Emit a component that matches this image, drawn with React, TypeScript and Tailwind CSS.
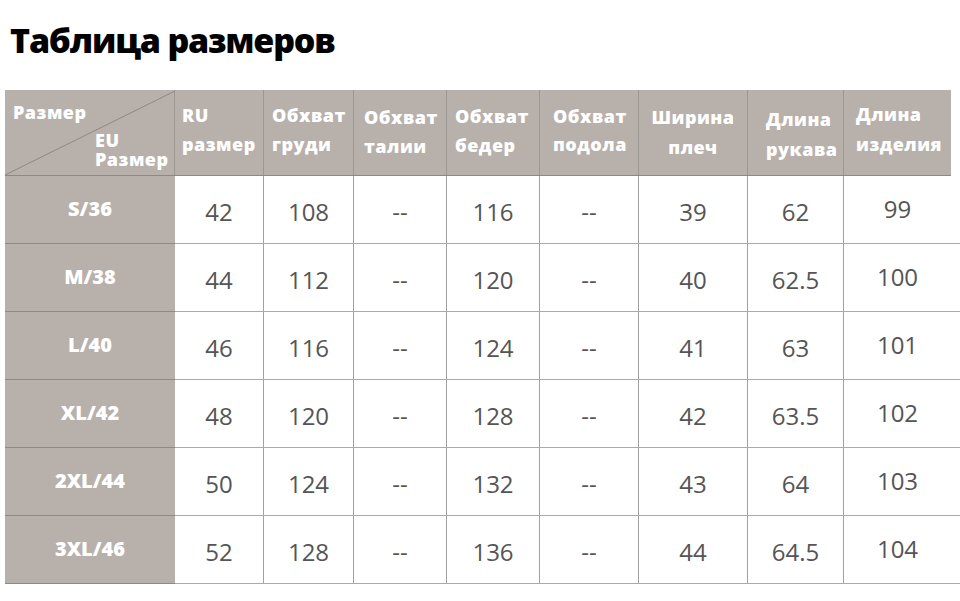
import React from "react";

const rows = [
  ["S/36", "42", "108", "--", "116", "--", "39", "62", "99"],
  ["M/38", "44", "112", "--", "120", "--", "40", "62.5", "100"],
  ["L/40", "46", "116", "--", "124", "--", "41", "63", "101"],
  ["XL/42", "48", "120", "--", "128", "--", "42", "63.5", "102"],
  ["2XL/44", "50", "124", "--", "132", "--", "43", "64", "103"],
  ["3XL/46", "52", "128", "--", "136", "--", "44", "64.5", "104"],
];

const dataCellW = [
  "w-[89px]",
  "w-[90px]",
  "w-[93px]",
  "w-[93px]",
  "w-[99px]",
  "w-[109px]",
  "w-[96px]",
];

export default function App() {
  return (
    <div
      className="w-[960px] h-[601px] bg-white overflow-hidden"
      style={{ fontFamily: "'Open Sans', 'Noto Sans', sans-serif" }}
    >
      <h1 className="pt-[20px] pl-[10px] text-[34px] leading-[40px] font-extrabold tracking-[-1.2px] text-black">
        Таблица размеров
      </h1>

      {/* header */}
      <div className="mt-[30px] ml-[5px] flex h-[86px] w-[946px] bg-[#b8b0ab] border-b border-[#8f8985] text-white font-extrabold text-[18px] tracking-[0.5px]">
        <div className="relative w-[170px] shrink-0 border-r border-[#9d9794] pt-[13px] leading-[19px]">
          <svg
            className="absolute inset-0"
            width="170"
            height="85"
            viewBox="0 0 170 85"
          >
            <line x1="0" y1="85" x2="170" y2="1" stroke="#8f8985" strokeWidth="1" />
          </svg>
          <div className="relative pl-[8px]">Размер</div>
          <div className="relative pl-[90px] mt-[9px]">
            EU
            <br />
            Размер
          </div>
        </div>
        <div className="w-[89px] shrink-0 border-r border-[#9d9794] pl-[7px] pt-[11px] leading-[29px]">
          <div>RU</div>
          <div>размер</div>
        </div>
        <div className="w-[90px] shrink-0 border-r border-[#9d9794] pl-[8px] pt-[11px] leading-[29px]">
          <div>Обхват</div>
          <div>груди</div>
        </div>
        <div className="w-[93px] shrink-0 border-r border-[#9d9794] pl-[10px] pt-[13px] leading-[29px]">
          <div>Обхват</div>
          <div>талии</div>
        </div>
        <div className="w-[93px] shrink-0 border-r border-[#9d9794] pl-[8px] pt-[12px] leading-[29px]">
          <div>Обхват</div>
          <div>бедер</div>
        </div>
        <div className="w-[99px] shrink-0 border-r border-[#9d9794] pl-[13px] pt-[12px] leading-[28px]">
          <div>Обхват</div>
          <div>подола</div>
        </div>
        <div className="w-[109px] shrink-0 border-r border-[#9d9794] pt-[12px] leading-[30px] text-center">
          <div>Ширина</div>
          <div>плеч</div>
        </div>
        <div className="w-[96px] shrink-0 border-r border-[#9d9794] pl-[18px] pt-[14px] leading-[30px]">
          <div>Длина</div>
          <div>рукава</div>
        </div>
        <div className="flex-1 pl-[12px] pt-[9px] leading-[30px]">
          <div>Длина</div>
          <div>изделия</div>
        </div>
      </div>

      {/* body */}
      {rows.map((r, i) => (
        <div key={i} className="flex h-[68px]">
          <div className="ml-[5px] w-[170px] shrink-0 bg-[#b8b0ab] border-b border-[#8f8985] flex items-center justify-center text-white font-extrabold text-[20px] pb-[2px]">
            {r[0]}
          </div>
          <div className="flex flex-1 border-b border-[#aaaaaa] text-[24px] text-[#555555]">
            {r.slice(1, 8).map((v, j) => (
              <div
                key={j}
                className={`${dataCellW[j]} shrink-0 border-r border-[#a0a0a0] flex items-center justify-center pt-[4px]`}
              >
                {v}
              </div>
            ))}
            <div className="w-[107px] shrink-0 flex items-center justify-center pb-[2px]">
              {r[8]}
            </div>
          </div>
        </div>
      ))}
    </div>
  );
}
